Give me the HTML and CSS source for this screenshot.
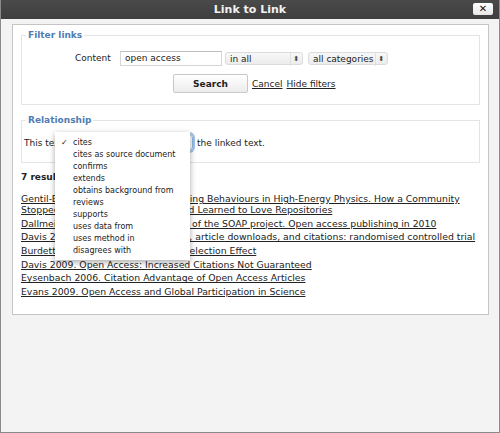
FILE: index.html
```html
<!DOCTYPE html>
<html>
<head>
<meta charset="utf-8">
<link rel="stylesheet" href="styles.css">
</head>
<body>
<div class="window">
  <div class="titlebar">
    <span class="title">Link to Link</span>
    <span class="close">✕</span>
  </div>
  <div class="panel">
    <fieldset class="box filter">
      <legend>Filter links</legend>
      <div class="row">
        <label class="lbl">Content</label>
        <div class="input">open access</div>
        <div class="select sel-in">in all<span class="arrows">⬍</span></div>
        <div class="select sel-cat">all categories<span class="arrows">⬍</span></div>
      </div>
      <div class="row row-btn">
        <button class="btn">Search</button>
        <a class="lnk">Cancel</a>
        <a class="lnk">Hide filters</a>
      </div>
    </fieldset>
    <fieldset class="box rel">
      <legend>Relationship</legend>
      <div class="relrow">
        <span>This text</span>
        <div class="fsel">
          <div class="focus-select">cites</div>
          <ul class="menu">
            <li class="checked"><span class="chk">✓</span>cites</li>
            <li>cites as source document</li>
            <li>confirms</li>
            <li>extends</li>
            <li>obtains background from</li>
            <li>reviews</li>
            <li>supports</li>
            <li>uses data from</li>
            <li>uses method in</li>
            <li>disagrees with</li>
          </ul>
        </div>
        <span>the linked text.</span>
      </div>
    </fieldset>
    <div class="results-head">7 results</div>
    <ul class="results">
      <li><a>Gentil-Beccot 2009. Citing and Reading Behaviours in High-Energy Physics. How a Community Stopped Worrying about Journals and Learned to Love Repositories</a></li>
      <li><a>Dallmeier-Tiessen 2010. First results of the SOAP project. Open access publishing in 2010</a></li>
      <li><a>Davis 2008. Open access publishing, article downloads, and citations: randomised controlled trial</a></li>
      <li><a>Burdett 2010. Open Access or Self-Selection Effect</a></li>
      <li><a>Davis 2009. Open Access: Increased Citations Not Guaranteed</a></li>
      <li><a>Eysenbach 2006. Citation Advantage of Open Access Articles</a></li>
      <li><a>Evans 2009. Open Access and Global Participation in Science</a></li>
    </ul>
  </div>
</div>
</body>
</html>
```

FILE: styles.css
```css
html, body {
  margin: 0;
  padding: 0;
  background: #f4f4f4;
}
body {
  font-family: "DejaVu Sans", Verdana, sans-serif;
  font-size: 9px;
  color: #222;
}
.window {
  width: 500px;
  height: 433px;
  box-sizing: border-box;
  border: 1px solid #8a8a8a;
  border-top: none;
  background: #f3f3f3;
  position: relative;
}
.titlebar {
  height: 19px;
  background: linear-gradient(#4a4a4a, #3e3e3e);
  display: flex;
  align-items: center;
  justify-content: center;
  position: relative;
}
.title {
  color: #f2f2f2;
  font-weight: bold;
  font-size: 11px;
}
.close {
  position: absolute;
  right: 6px;
  top: 3px;
  width: 20px;
  height: 12px;
  background: linear-gradient(#ffffff, #e6e6e6);
  border-radius: 2px;
  color: #111;
  font-size: 10px;
  font-weight: bold;
  line-height: 12px;
  text-align: center;
}
.panel {
  margin: 5px 10px 0 11px;
  height: 289px;
  background: #fff;
  border: 1px solid #c4c4c4;
  padding: 0 8px;
}
.box {
  margin: 4px 0 0 0;
  border: 1px solid #e4e4e4;
  padding: 0;
}
.box legend {
  color: #4f7db3;
  font-weight: bold;
  font-size: 9px;
  line-height: 12px;
  padding: 0 2px;
  margin-left: 4px;
}
.filter {
  padding: 10px 0 11px 0;
}
.row {
  display: flex;
  align-items: center;
  height: 14px;
}
.lbl {
  margin-left: 53px;
  width: 45px;
}
.input {
  width: 96px;
  height: 13px;
  border: 1px solid #d6d6d6;
  border-top-color: #c0c0c0;
  padding-left: 4px;
  line-height: 13px;
  box-sizing: content-box;
  margin-right: 3px;
}
.select {
  height: 13px;
  line-height: 13px;
  border-radius: 3px;
  background: linear-gradient(#f8f8f8, #ececec);
  border: 1px solid #dcdcdc;
  padding-left: 4px;
  position: relative;
  box-sizing: border-box;
}
.sel-in { width: 78px; margin-right: 5px; }
.sel-cat { width: 80px; }
.arrows {
  position: absolute;
  right: 3px;
  top: 0;
  font-size: 7px;
  color: #444;
  border-left: 1px solid #e0e0e0;
  padding-left: 2px;
}
.row-btn {
  margin-top: 9px;
  height: 19px;
}
.btn {
  margin-left: 151px;
  width: 75px;
  height: 19px;
  border: 1px solid #c8c8c8;
  border-radius: 2px;
  background: linear-gradient(#ffffff, #ececec);
  font-family: "DejaVu Sans", Verdana, sans-serif;
  font-weight: bold;
  font-size: 9px;
  color: #222;
  padding: 0;
  margin-right: 4px;
}
.lnk {
  text-decoration: underline;
  color: #222;
  margin-right: 4px;
}
.rel {
  margin-top: 9px;
  padding: 7px 0 10px 0;
}
.relrow {
  display: flex;
  align-items: center;
  height: 19px;
  padding-left: 2px;
}
.fsel {
  position: relative;
  margin: 0 4px 0 4px;
}
.focus-select {
  width: 126px;
  height: 17px;
  box-sizing: border-box;
  border: 1px solid #8fb4dd;
  border-radius: 4px;
  box-shadow: 0 0 0 2px #9cc1e8;
  padding-left: 6px;
  line-height: 15px;
}
.menu {
  position: absolute;
  left: -12px;
  top: -2px;
  width: 135px;
  margin: 0;
  padding: 5px 0 3px 0;
  list-style: none;
  background: #fff;
  box-shadow: 0 2px 6px rgba(0,0,0,0.35);
  font-size: 8px;
  z-index: 2;
}
.menu li {
  height: 12px;
  line-height: 12px;
  padding-left: 18px;
  position: relative;
  color: #222;
}
.chk {
  position: absolute;
  left: 6px;
  top: 0;
}
.results-head {
  font-weight: bold;
  font-size: 9px;
  margin-top: 9px;
  margin-bottom: 11px;
}
.results {
  list-style: none;
  margin: 0;
  padding: 0;
  font-size: 9.3px;
}
.results li {
  line-height: 11px;
  margin-bottom: 2.7px;
}
.results a {
  color: #222;
  text-decoration: underline;
}
```
